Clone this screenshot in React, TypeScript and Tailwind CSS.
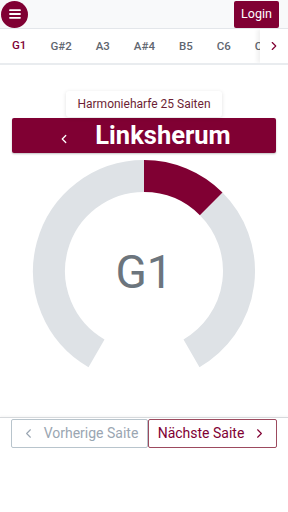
import { ChevronLeft, ChevronRight } from 'lucide-react'

const TABS = ['G1', 'G#2', 'A3', 'A#4', 'B5', 'C6', 'C#7']

// gauge geometry: center (144,118) in svg, mid radius 95, stroke 32
function pt(deg: number, r = 95) {
  const a = (deg * Math.PI) / 180
  return `${(144 + r * Math.sin(a)).toFixed(2)} ${(118 - r * Math.cos(a)).toFixed(2)}`
}
function arc(from: number, to: number) {
  return `M ${pt(from)} A 95 95 0 ${to - from > 180 ? 1 : 0} 1 ${pt(to)}`
}

export default function App() {
  return (
    <div className="w-full h-[512px] bg-white overflow-hidden" style={{ fontFamily: 'Roboto, "Noto Sans", sans-serif' }}>
      {/* top bar */}
      <div className="h-[29px] bg-[#f8f9fa] border-b border-[#e3e6ea] flex items-center justify-between pl-[1px] pr-[9px]">
        <button className="w-[27px] h-[27px] rounded-full bg-[#800033] flex items-center justify-center">
          <svg width="12" height="10" viewBox="0 0 12 10">
            <path d="M1 1.2h10M1 5h10M1 8.8h10" stroke="#fff" strokeWidth="1.8" strokeLinecap="round" />
          </svg>
        </button>
        <button className="w-[45px] h-[27px] rounded-[2px] bg-[#800033] text-white text-[12.5px] flex items-center justify-center">
          Login
        </button>
      </div>

      {/* tabs */}
      <div className="relative h-[36px] border-b-2 border-[#e9ecef] overflow-hidden">
        <div className="flex h-full">
          {TABS.map((t, i) => (
            <div
              key={t}
              className={`px-3 h-[36px] -mb-[2px] flex items-center shrink-0 text-[11.5px] font-medium ${
                i === 0 ? 'text-[#800033] border-b-2 border-[#800033]' : 'text-[#5f6670]'
              }`}
            >
              {t}
            </div>
          ))}
        </div>
        <div className="absolute right-0 top-0 h-full w-[28px] bg-white shadow-[-3px_0_4px_rgba(0,0,0,0.06)] flex items-center justify-center">
          <ChevronRight size={14} strokeWidth={2} className="text-[#800033]" />
        </div>
      </div>

      {/* instrument card */}
      <div className="pt-[26px] flex justify-center">
        <div className="w-[156px] h-[26px] bg-white rounded-[3px] shadow-[0_1px_4px_rgba(0,0,0,0.12)] flex items-center justify-center text-[12px] text-[#6d1f35]">
          Harmonieharfe 25 Saiten
        </div>
      </div>

      {/* direction banner */}
      <div className="mx-[12px] mt-[1px] h-[35px] bg-[#800033] rounded-[2px] shadow-[0_1px_2px_rgba(0,0,0,0.25)] flex items-center justify-center gap-[24px] text-white">
        <ChevronLeft size={14} strokeWidth={2.2} className="mt-[6px]" />
        <span className="text-[25.5px] font-bold leading-none">Linksherum</span>
      </div>

      {/* gauge */}
      <div className="relative h-[264px]">
        <svg width="288" height="264" viewBox="0 0 288 264" className="block">
          <path d={arc(-150, 0)} fill="none" stroke="#dee2e6" strokeWidth="32" />
          <path d={arc(45, 150)} fill="none" stroke="#dee2e6" strokeWidth="32" />
          <path d={arc(0, 45)} fill="none" stroke="#800033" strokeWidth="32" />
        </svg>
        <div className="absolute left-0 right-0 top-[90px] text-center text-[46px] leading-[58px] text-[#6c757d]">G1</div>
      </div>

      {/* navigation */}
      <div className="border-t border-[#d6d9dc] shadow-[0_-1px_2px_rgba(0,0,0,0.04)] pt-[1px] pl-[11px] flex">
        <button className="w-[137px] h-[29px] border border-[#b8c4cc] rounded-[2px] flex items-center justify-center gap-[8px] text-[14px] text-[#9aa6b2]">
          <ChevronLeft size={15} strokeWidth={1.8} />
          Vorherige Saite
        </button>
        <button className="w-[129px] h-[29px] border border-[#9c4a5e] rounded-[2px] flex items-center justify-center gap-[8px] text-[14px] text-[#800033]">
          Nächste Saite
          <ChevronRight size={15} strokeWidth={1.8} />
        </button>
      </div>
    </div>
  )
}
